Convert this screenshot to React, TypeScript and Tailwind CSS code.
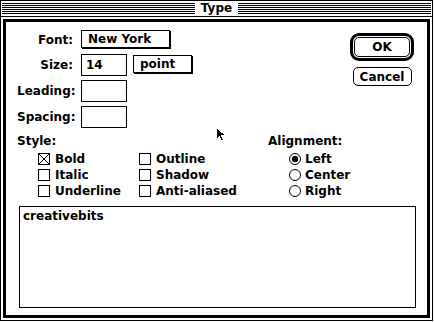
import type { ReactNode } from "react";

const stripes =
  "h-[11px] flex-1 bg-[repeating-linear-gradient(to_bottom,#000_0px,#000_1px,#fff_1px,#fff_2px)]";

function Popup({ children, className }: { children: ReactNode; className: string }) {
  return (
    <div
      className={`h-[18px] border border-black bg-white shadow-[1px_1px_0_#000] pl-[6px] flex items-center leading-none ${className}`}
    >
      {children}
    </div>
  );
}

function Row({ label, children, className }: { label: string; children?: ReactNode; className: string }) {
  return (
    <div className={`flex items-center ${className}`}>
      <span className="w-[56px] mr-[8px] text-right whitespace-nowrap">{label}</span>
      {children}
    </div>
  );
}

function Field({ value }: { value?: string }) {
  return (
    <div className="w-[46px] h-[22px] border border-black pl-[4px] flex items-center leading-none">
      {value}
    </div>
  );
}

function Check({ label, checked }: { label: string; checked?: boolean }) {
  return (
    <div className="h-[16px] flex items-center gap-[5px] whitespace-nowrap">
      <svg width="12" height="12" viewBox="0 0 12 12" shapeRendering="crispEdges">
        <rect x="0.5" y="0.5" width="11" height="11" fill="#fff" stroke="#000" />
        {checked && (
          <g stroke="#000" strokeWidth="1" shapeRendering="auto">
            <line x1="1" y1="1" x2="11" y2="11" />
            <line x1="11" y1="1" x2="1" y2="11" />
          </g>
        )}
      </svg>
      <span>{label}</span>
    </div>
  );
}

function Radio({ label, checked }: { label: string; checked?: boolean }) {
  return (
    <div className="h-[16px] flex items-center gap-[4px] whitespace-nowrap">
      <svg width="12" height="12" viewBox="0 0 12 12">
        <circle cx="6" cy="6" r="5.5" fill="#fff" stroke="#000" />
        {checked && <circle cx="6" cy="6" r="3.2" fill="#000" />}
      </svg>
      <span>{label}</span>
    </div>
  );
}

export default function App() {
  return (
    <div className="relative w-[434px] h-[322px] bg-white text-black text-[12px] font-bold font-['DejaVu_Sans',sans-serif]">
      {/* window */}
      <div className="w-[433px] h-[321px] border border-black flex flex-col">
        {/* title bar */}
        <div className="h-[16px] shrink-0 border-b border-black px-[1px] flex items-center">
          <div className={stripes} />
          <span className="px-[6px] leading-[15px] text-[12px]">Type</span>
          <div className={stripes} />
        </div>

        {/* dialog frame */}
        <div className="flex-1 p-[2px] flex">
          <div className="flex-1 border-[3px] border-black pt-[8px] pl-[11px] flex flex-col">
            <div className="flex justify-between">
              <div className="flex flex-col">
                <Row label="Font:" className="h-[19px]">
                  <Popup className="w-[89px] self-start">New York</Popup>
                </Row>
                <Row label="Size:" className="h-[22px] mt-[5px]">
                  <Field value="14" />
                  <Popup className="w-[59px] ml-[6px] self-start mt-[1px]">point</Popup>
                </Row>
                <Row label="Leading:" className="h-[22px] mt-[4px]">
                  <Field />
                </Row>
                <Row label="Spacing:" className="h-[22px] mt-[4px]">
                  <Field />
                </Row>
              </div>

              <div className="flex flex-col items-center mr-[13px] mt-[3px]">
                <div className="w-[64px] h-[28px] border-[3px] border-black rounded-[9px] p-[1px]">
                  <div className="h-full border border-black rounded-[5px] flex items-center justify-center leading-none">
                    OK
                  </div>
                </div>
                <div className="w-[59px] h-[19px] mt-[6px] border border-black rounded-[5px] flex items-center justify-center leading-none">
                  Cancel
                </div>
              </div>
            </div>

            <div className="flex mt-[5px]">
              <div className="w-[251px]">
                <div className="h-[16px] leading-[16px]">Style:</div>
                <div className="pl-[21px] mt-[2px] grid grid-cols-[101px_1fr]">
                  <Check label="Bold" checked />
                  <Check label="Outline" />
                  <Check label="Italic" />
                  <Check label="Shadow" />
                  <Check label="Underline" />
                  <Check label="Anti-aliased" />
                </div>
              </div>
              <div>
                <div className="h-[16px] leading-[16px]">Alignment:</div>
                <div className="pl-[21px] mt-[2px] flex flex-col">
                  <Radio label="Left" checked />
                  <Radio label="Center" />
                  <Radio label="Right" />
                </div>
              </div>
            </div>

            <div className="mt-[7px] ml-[2px] w-[397px] h-[102px] border border-black pl-[3px] pt-[1px] leading-[16px]">
              creativebits
            </div>
          </div>
        </div>
      </div>

      {/* mouse pointer */}
      <svg
        className="absolute left-[216px] top-[127px]"
        width="11"
        height="16"
        viewBox="0 0 11 16"
        shapeRendering="crispEdges"
      >
        <path d="M0.5 0.5 L0.5 12.5 L3.5 9.5 L5.5 14.5 L7.5 13.5 L5.5 8.5 L9.5 8.5 Z" fill="#000" stroke="#fff" strokeWidth="1" />
      </svg>
    </div>
  );
}
